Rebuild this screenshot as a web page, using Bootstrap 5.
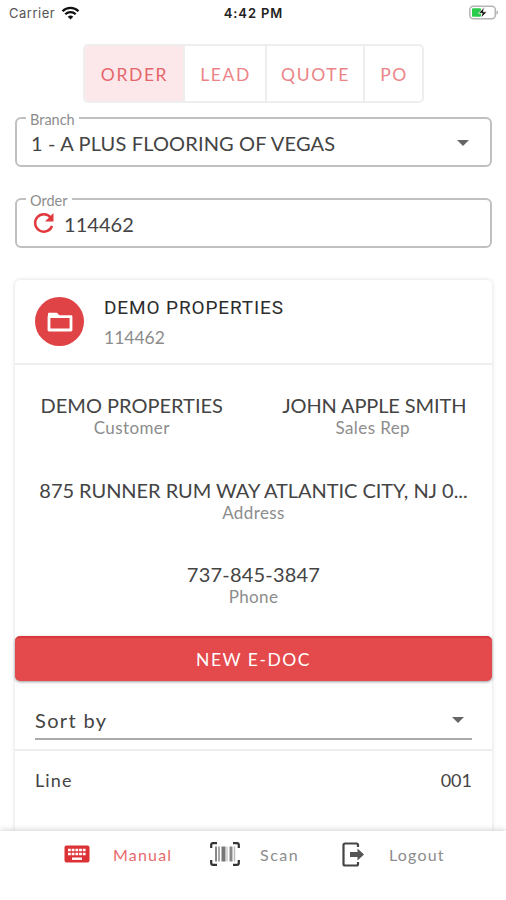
<!DOCTYPE html>
<html lang="en">
<head>
<meta charset="utf-8">
<meta name="viewport" content="width=device-width, initial-scale=1">
<title>Order</title>
<link href="https://cdn.jsdelivr.net/npm/bootstrap@5.3.0/dist/css/bootstrap.min.css" rel="stylesheet">
<style>
  :root { --brand: #e4494c; --line: #eee; }
  body { font-family: Lato, "Open Sans", sans-serif; color: #444; background: #fff; }
  .screen { height: 900px; }

  .status-bar { height: 44px; padding: 3px 8px 0 9px; font-family: Inter, Roboto, sans-serif; font-size: 13px; line-height: 20px; color: #222; }
  .status-side { width: 100px; }
  .carrier { letter-spacing: .5px; color: #555; }
  .wifi { margin: 3px 0 0 -2px; }
  .battery { margin-top: 2px; }
  .clock { font-weight: 600; letter-spacing: .9px; }

  .doc-tabs { width: 341px; height: 59px; border: 2px solid var(--line); border-radius: 5px; font-size: 17.5px; letter-spacing: 1.6px; }
  .doc-tabs .btn { --bs-btn-color: #ec8487; --bs-btn-active-color: #e5666a; --bs-btn-active-bg: #fce8ea; --bs-btn-border-radius: 0; border: 0; padding: 4px 0 0 2px; font-size: inherit; letter-spacing: inherit; }
  .doc-tabs .btn + .btn { border-left: 2px solid var(--line); }
  .t-order { width: 98px; } .t-lead { width: 82px; } .t-quote { width: 98px; } .t-po { width: 59px; }

  .content-area { min-height: 0; padding: 0 14px 0 15px; }
  .outlined { height: 50px; border: 2px solid #c0c0c0; border-radius: 6px; padding: 1px 21px 0 14px; font-size: 20px; }
  .outlined label { top: -9px; left: 9px; padding: 0 4px; background: #fff; font-size: 14.5px; line-height: 20px; color: #8c8c8c; }
  .first-field { margin-top: 14px; }
  .second-field { margin-top: 31px; }
  .order-reload { margin: -2px 9px 0 2px; }
  .branch-value { letter-spacing: .15px; }
  .order-value { letter-spacing: .05px; }
  .caret { width: 0; height: 0; border: 6px solid transparent; border-top-color: #666; border-bottom: 0; }

  .order-card { margin-top: 32px; border-radius: 5px 5px 0 0; box-shadow: 0 0 4px rgba(0,0,0,.15); }
  .order-head { height: 85px; padding: 0 20px; border-bottom: 2px solid var(--line); }
  .avatar { width: 49px; height: 49px; background: #e04346; }
  .head-text { margin-left: 20px; padding-top: 3px; }
  .head-name { font-family: Roboto, sans-serif; font-size: 19px; line-height: 30px; color: #2c2c2c; letter-spacing: .88px; }
  .head-no { font-size: 17.5px; line-height: 30px; color: #8c8c8c; }
  .details { padding-top: 28px; height: 271px; gap: 38.5px; }
  .val { font-size: 20px; line-height: 24px; }
  .cap { font-size: 17px; line-height: 22px; color: #8c8c8c; letter-spacing: .4px; }
  .cust { padding-right: 5px; }
  .rep { padding-left: 3px; }
  .rep .val { letter-spacing: -.12px; }
  .rep .cap { padding-right: 3px; }
  .address .val { letter-spacing: -.05px; }
  .phone .val { letter-spacing: .2px; }

  .btn-edoc { --bs-btn-color: #fff; --bs-btn-bg: var(--brand); height: 45px; border: 0; border-top: 2px solid #d8383c; border-radius: 5px; padding: 1px 0 0; font-size: 17.5px; letter-spacing: 1.5px; box-shadow: 0 1px 3px rgba(0,0,0,.4); }
  .sort-row { height: 70px; padding: 20px 20px 9px; border-bottom: 2px solid var(--line); }
  .sort-select { border-bottom: 2px solid #aaa; font-size: 20px; padding-right: 8px; letter-spacing: 1.35px; }
  .line-row { padding: 14px 20px; font-size: 18px; line-height: 30px; }
  .line-label { letter-spacing: 1.1px; }

  .tab-bar { height: 69px; padding: 7px 0 0 64px; background: #fff; box-shadow: 0 -1px 6px rgba(0,0,0,.18); z-index: 2; font-size: 16px; line-height: 34px; letter-spacing: 1.2px; }
  .tab-bar a { color: #8c8c8c; }
  .tab-bar svg { flex: none; margin-top: 4px; }
  .tab-bar .tab-manual { color: #e86a6d; width: 146px; }
  .tab-manual svg { margin-top: 7px; }
  .tab-manual span { margin-left: 23px; }
  .tab-scan { width: 132px; }
  .tab-scan span { margin-left: 20px; letter-spacing: 1.5px; }
  .tab-logout span { margin-left: 24px; }
</style>
</head>
<body>
<div class="screen d-flex flex-column overflow-hidden">
  <header class="status-bar d-flex justify-content-between flex-shrink-0">
    <div class="status-side d-flex gap-2">
      <span class="carrier">Carrier</span>
      <svg class="wifi" width="19" height="14" viewBox="0 0 18 14" fill="none" stroke="#111" stroke-width="2.3"><path d="M1 5.2a11.4 11.4 0 0 1 16 0M3.8 8.3a7.4 7.4 0 0 1 10.4 0"/><path d="M9 13.6 6.2 10.8a4 4 0 0 1 5.6 0z" fill="#111" stroke="none"/></svg>
    </div>
    <span class="clock">4:42 PM</span>
    <div class="status-side d-flex justify-content-end">
      <svg class="battery" width="29" height="15" viewBox="0 0 29 15"><rect x=".8" y="1.300" width="25.5" height="12.5" rx="3.5" fill="#fff" stroke="#b4b4b4" stroke-width="1.5"/><path d="M27.5 5.300v4.500q1.500-.5 1.500-2.200T27.500 5.300" fill="#aaa"/><rect x="3" y="3.300" width="9" height="8.500" rx="1" fill="#2bcb4b"/><path d="M15.6 1.800 9.500 8.300h3.700L11.800 13.300 18 6.800h-3.700z" fill="#111" stroke="#fff" stroke-width=".8"/></svg>
    </div>
  </header>

  <nav class="doc-tabs d-flex mx-auto overflow-hidden flex-shrink-0">
    <button class="btn active t-order">ORDER</button>
    <button class="btn t-lead">LEAD</button>
    <button class="btn t-quote">QUOTE</button>
    <button class="btn t-po">PO</button>
  </nav>

  <main class="content-area flex-grow-1 d-flex flex-column">
    <div class="outlined first-field position-relative d-flex align-items-center justify-content-between flex-shrink-0">
      <label class="position-absolute">Branch</label>
      <span class="branch-value">1 - A PLUS FLOORING OF VEGAS</span>
      <i class="caret"></i>
    </div>
    <div class="outlined second-field position-relative d-flex align-items-center flex-shrink-0">
      <label class="position-absolute">Order</label>
      <svg class="order-reload" width="22" height="22" viewBox="0 0 22 22"><path d="M17.6 5.5A8.700 8.700 0 1 0 19 14" fill="none" stroke="#e03a3e" stroke-width="2.5"/><path d="M20.5 1v8.500H12z" fill="#e03a3e"/></svg>
      <span class="order-value">114462</span>
    </div>

    <section class="order-card flex-grow-1">
      <div class="order-head d-flex align-items-center">
        <span class="avatar rounded-circle d-flex align-items-center justify-content-center">
          <svg width="26" height="22" viewBox="0 0 26 22" fill="none" stroke="#fff" stroke-width="2.8" stroke-linejoin="round"><path d="M2 5.700h22V19H2z"/><path d="M2 6V2.800h7.500L12.500 6z" fill="#fff" stroke-width="2"/></svg>
        </span>
        <div class="head-text">
          <div class="head-name">DEMO PROPERTIES</div>
          <div class="head-no">114462</div>
        </div>
      </div>
      <div class="details d-flex flex-column text-center">
        <div class="row g-0">
          <div class="col-6 cust"><div class="val">DEMO PROPERTIES</div><div class="cap">Customer</div></div>
          <div class="col-6 rep"><div class="val">JOHN APPLE SMITH</div><div class="cap">Sales Rep</div></div>
        </div>
        <div class="address"><div class="val text-nowrap">875 RUNNER RUM WAY ATLANTIC CITY, NJ 0...</div><div class="cap">Address</div></div>
        <div class="phone"><div class="val">737-845-3847</div><div class="cap">Phone</div></div>
      </div>
      <button class="btn btn-edoc w-100 d-block">NEW E-DOC</button>
      <div class="sort-row">
        <div class="sort-select d-flex align-items-center justify-content-between h-100"><span>Sort by</span><i class="caret"></i></div>
      </div>
      <div class="line-row d-flex justify-content-between"><span class="line-label">Line</span><span>001</span></div>
    </section>
  </main>

  <footer class="tab-bar d-flex flex-shrink-0">
    <a class="tab-manual d-flex text-decoration-none">
      <svg width="26" height="18" viewBox="0 0 26 18"><rect x=".5" y=".5" width="25" height="17" rx="2" fill="#dc3236"/><g stroke="#fff" stroke-width="2.6" stroke-dasharray="2.8 .9"><path d="M4 5h18.500M4 9h18.500"/></g><path d="M8 13.700h10" stroke="#fff" stroke-width="2.4"/></svg>
      <span>Manual</span>
    </a>
    <a class="tab-scan d-flex text-decoration-none">
      <svg width="30" height="24" viewBox="0 0 30 24" fill="none" stroke="#333" stroke-width="2.2"><path d="M1.2 6V3q0-1.800 1.800-1.800h4M23 1.200h4q1.800 0 1.800 1.800v3M28.800 18v3q0 1.800-1.800 1.800h-4M7 22.800H3q-1.800 0-1.800-1.800v-3"/><path d="M6 4.500v15" stroke-width="2" stroke="#888"/><path d="M9 4.500v15" stroke-width="2" stroke="#aaa"/><path d="M13.500 4.500v15" stroke-width="4" stroke="#777"/><path d="M17 4.500v15" stroke-width="1.5" stroke="#ccc"/><path d="M21 4.500v15" stroke-width="3" stroke="#888"/><path d="M24.500 4.500v15" stroke-width="1.5" stroke="#bbb"/></svg>
      <span>Scan</span>
    </a>
    <a class="tab-logout d-flex text-decoration-none">
      <svg width="23" height="25" viewBox="0 0 23 25"><path d="M16 5V3q0-1.500-1.500-1.500H3Q1.500 1.500 1.500 3v19q0 1.500 1.500 1.500h11.500q1.500 0 1.500-1.500v-2" fill="none" stroke="#444" stroke-width="2.2"/><path d="M8 10h7.500V6.500l6.500 6-6.500 6V15H8z" fill="#555"/></svg>
      <span>Logout</span>
    </a>
  </footer>
</div>
<script src="https://cdn.jsdelivr.net/npm/bootstrap@5.3.0/dist/js/bootstrap.bundle.min.js"></script>
</body>
</html>
